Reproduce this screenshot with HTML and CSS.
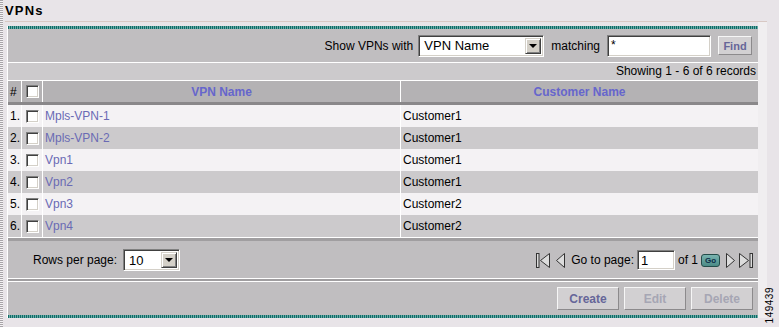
FILE: index.html
```html
<!DOCTYPE html>
<html lang="en">
<head>
<meta charset="UTF-8" />
<title>VPNs</title>
<link rel="stylesheet" href="styles.css">
</head>
<body>

<!-- Page title -->
<div class="title">VPNs</div>

<div class="content">
  <div class="panel">
    <div class="rule"></div>

    <!-- Filter -->
    <div class="toolbar">
      <span>Show VPNs with</span>
      <span class="select select-field">
        <span class="select-value">VPN Name</span>
        <span class="select-btn"><i class="arrow"></i></span>
      </span>
      <span class="gap-left">matching</span>
      <span class="input input-match">*</span>
      <span class="btn btn-find">Find</span>
    </div>

    <div class="count">Showing 1 - 6 of 6 records</div>

    <!-- Table -->
    <div class="row head">
      <div class="cell num">#</div>
      <div class="cell chk"><span class="check"></span></div>
      <div class="cell center">VPN Name</div>
      <div class="cell center">Customer Name</div>
    </div>
    <div class="row">
      <div class="cell num">1.</div>
      <div class="cell chk"><span class="check"></span></div>
      <div class="cell"><a href="#" class="link">Mpls-VPN-1</a></div>
      <div class="cell">Customer1</div>
    </div>
    <div class="row">
      <div class="cell num">2.</div>
      <div class="cell chk"><span class="check"></span></div>
      <div class="cell"><a href="#" class="link">Mpls-VPN-2</a></div>
      <div class="cell">Customer1</div>
    </div>
    <div class="row">
      <div class="cell num">3.</div>
      <div class="cell chk"><span class="check"></span></div>
      <div class="cell"><a href="#" class="link">Vpn1</a></div>
      <div class="cell">Customer1</div>
    </div>
    <div class="row">
      <div class="cell num">4.</div>
      <div class="cell chk"><span class="check"></span></div>
      <div class="cell"><a href="#" class="link">Vpn2</a></div>
      <div class="cell">Customer1</div>
    </div>
    <div class="row">
      <div class="cell num">5.</div>
      <div class="cell chk"><span class="check"></span></div>
      <div class="cell"><a href="#" class="link">Vpn3</a></div>
      <div class="cell">Customer2</div>
    </div>
    <div class="row">
      <div class="cell num">6.</div>
      <div class="cell chk"><span class="check"></span></div>
      <div class="cell"><a href="#" class="link">Vpn4</a></div>
      <div class="cell">Customer2</div>
    </div>

    <!-- Paging -->
    <div class="pager">
      <div class="pager-left">
        <span>Rows per page:</span>
        <span class="select select-rows">
          <span class="select-value">10</span>
          <span class="select-btn"><i class="arrow"></i></span>
        </span>
      </div>
      <div class="pager-right">
        <svg class="nav-first" width="14" height="15" viewBox="0 0 14 15">
          <rect x="0.5" y="0.5" width="2.5" height="14" fill="#dcdcdc" stroke="#333"/>
          <polygon points="4.5,7.5 13.5,0.5 13.5,14.5" fill="#dcdcdc" stroke="#333"/>
        </svg>
        <svg class="nav-prev" width="9" height="15" viewBox="0 0 9 15">
          <polygon points="0.5,7.5 8.5,0.5 8.5,14.5" fill="#dcdcdc" stroke="#333"/>
        </svg>
        <span class="goto">Go to page:</span>
        <span class="input input-page">1</span>
        <span>of 1</span>
        <span class="go">Go</span>
        <svg class="nav-next" width="9" height="15" viewBox="0 0 9 15">
          <polygon points="8.5,7.5 0.5,0.5 0.5,14.5" fill="#dcdcdc" stroke="#333"/>
        </svg>
        <svg class="nav-last" width="14" height="15" viewBox="0 0 14 15">
          <polygon points="9.5,7.5 0.5,0.5 0.5,14.5" fill="#dcdcdc" stroke="#333"/>
          <rect x="11" y="0.5" width="2.5" height="14" fill="#dcdcdc" stroke="#333"/>
        </svg>
      </div>
    </div>

    <!-- Actions -->
    <div class="actions">
      <span class="btn btn-action">Create</span>
      <span class="btn btn-action disabled">Edit</span>
      <span class="btn btn-action disabled">Delete</span>
    </div>

    <div class="rule"></div>
  </div>
  <div class="strip"></div>
</div>

<div class="fig-id">149439</div>

</body>
</html>
```

FILE: styles.css
```css
/* Base */
* {
  box-sizing: border-box;
  margin: 0;
  padding: 0;
}

html, body {
  height: 100%;
}

body {
  position: relative;
  font-family: "Liberation Sans", Arial, sans-serif;
  font-size: 12px;
  color: #000;
  background:
    repeating-linear-gradient(180deg, #a8a4a8 0 1px, #f4f2f4 1px 2px) 0 0 / 3px 100% no-repeat,
    #e8e4e8;
}

/* Title */
.title {
  height: 22px;
  margin: 0 12px 0 5px;
  padding-top: 3px;
  border-bottom: 1px solid #d8c8c4;
  font-size: 13px;
  font-weight: bold;
  letter-spacing: 1.2px;
  line-height: 16px;
}

.content {
  display: flex;
  padding-left: 7px;
}

.panel {
  width: 751px;
  margin-top: 4px;
  border-left: 1px solid #fff;
  background: #c0bec0;
}

.strip {
  width: 9px;
  background: #f0eef0;
}

/* teal dotted border */
.rule {
  height: 3px;
  background: repeating-linear-gradient(90deg, #0f6b67 0 1px, #68aaa6 1px 2px);
}

/* Filter bar */
.toolbar {
  display: flex;
  align-items: center;
  justify-content: flex-end;
  gap: 5px;
  height: 34px;
  padding-right: 6px;
  border-bottom: 1px solid #fff;
}

.gap-left {
  margin-left: 2px;
  margin-right: 2px;
}

/* sunken field, windows classic */
.input,
.select {
  display: flex;
  align-items: center;
  background: #fff;
  border: 1px solid;
  border-color: #808080 #fff #fff #808080;
  box-shadow: inset 1px 1px #404040, inset -1px -1px #d4d0c8;
  font-size: 13px;
}

.select {
  justify-content: space-between;
  padding: 2px;
}

.select-value {
  padding-left: 3px;
}

.select-btn {
  display: flex;
  align-items: center;
  justify-content: center;
  width: 16px;
  height: 100%;
  background: #d4d0c8;
  border: 1px solid;
  border-color: #d4d0c8 #404040 #404040 #d4d0c8;
  box-shadow: inset 1px 1px #fff, inset -1px -1px #808080;
}

.arrow {
  width: 0;
  height: 0;
  border-left: 4px solid transparent;
  border-right: 4px solid transparent;
  border-top: 4px solid #000;
}

.select-field {
  width: 126px;
  height: 22px;
}

.input-match {
  width: 104px;
  height: 22px;
  align-items: flex-start;
  padding: 2px 0 0 3px;
  font-size: 12px;
}

/* raised grey button */
.btn {
  display: flex;
  align-items: center;
  justify-content: center;
  background: #d2d0d2;
  border: 1px solid;
  border-color: #f6f6f6 #8c8a8c #8c8a8c #f6f6f6;
  font-weight: bold;
  color: #666699;
}

.btn-find {
  width: 34px;
  height: 19px;
  margin-left: 2px;
  font-size: 11px;
}

/* Records count */
.count {
  height: 18px;
  padding-right: 2px;
  border-bottom: 1px solid #fff;
  background: #cccacc;
  text-align: right;
  line-height: 17px;
}

/* Grid rows */
.row {
  display: grid;
  grid-template-columns: 13px 21px 358px 1fr;
  height: 22px;
  background: #f4f2f4;
}

.row:nth-of-type(even) {
  background: #cccacc;
}

.row.head {
  height: 24px;
  background: #b4b2b4;
  border-bottom: 3px solid #8a888a;
  font-weight: bold;
  color: #6666cc;
}

.row.head .num {
  color: #000;
  font-weight: normal;
}

.cell {
  display: flex;
  align-items: center;
  padding-left: 2px;
  border-left: 1px solid #fff;
  white-space: nowrap;
}

.cell.num {
  border-left: 0;
}

.cell.chk {
  justify-content: center;
  padding-left: 0;
}

.cell.center {
  justify-content: center;
  padding-left: 0;
}

.check {
  width: 13px;
  height: 13px;
  background: #fff;
  border: 1px solid;
  border-color: #808080 #fff #fff #808080;
  box-shadow: inset 1px 1px #404040, inset -1px -1px #d4d0c8;
}

.link {
  color: #6a6ab4;
  text-decoration: none;
}

/* Paging bar */
.pager {
  display: flex;
  align-items: center;
  justify-content: space-between;
  height: 44px;
  padding: 3px 5px 0 25px;
  border-top: 1px solid #fff;
  border-bottom: 2px solid #a09ea0;
  box-shadow: inset 0 3px #a09ea0, inset 0 -1px #fff;
}

.pager-left {
  display: flex;
  align-items: center;
  gap: 6px;
}

.select-rows {
  width: 57px;
  height: 22px;
}

.pager-right {
  display: flex;
  align-items: center;
  gap: 3px;
}

.nav-prev {
  margin-left: 3px;
}

.goto {
  margin-left: 3px;
}

.input-page {
  width: 38px;
  height: 20px;
  padding-left: 3px;
}

.go {
  width: 19px;
  height: 13px;
  border: 1px solid #244c4a;
  border-radius: 3px;
  background: linear-gradient(#7ab4b0, #4a8a86);
  font-size: 8px;
  font-weight: bold;
  line-height: 11px;
  text-align: center;
  color: #0c2c48;
}

.nav-next {
  margin-left: 3px;
}

.nav-last {
  margin-left: 1px;
}

/* Actions */
.actions {
  display: flex;
  align-items: center;
  justify-content: flex-end;
  gap: 5px;
  height: 34px;
  padding-right: 5px;
  border-top: 1px solid #fff;
}

.btn-action {
  width: 62px;
  height: 23px;
  font-size: 12px;
}

.btn-action.disabled {
  color: #a6a6b4;
}

/* figure number, rotated */
.fig-id {
  position: absolute;
  left: 764px;
  top: 287px;
  writing-mode: vertical-rl;
  transform: rotate(180deg);
  font-size: 10px;
  letter-spacing: 0.5px;
  color: #000;
}
```
